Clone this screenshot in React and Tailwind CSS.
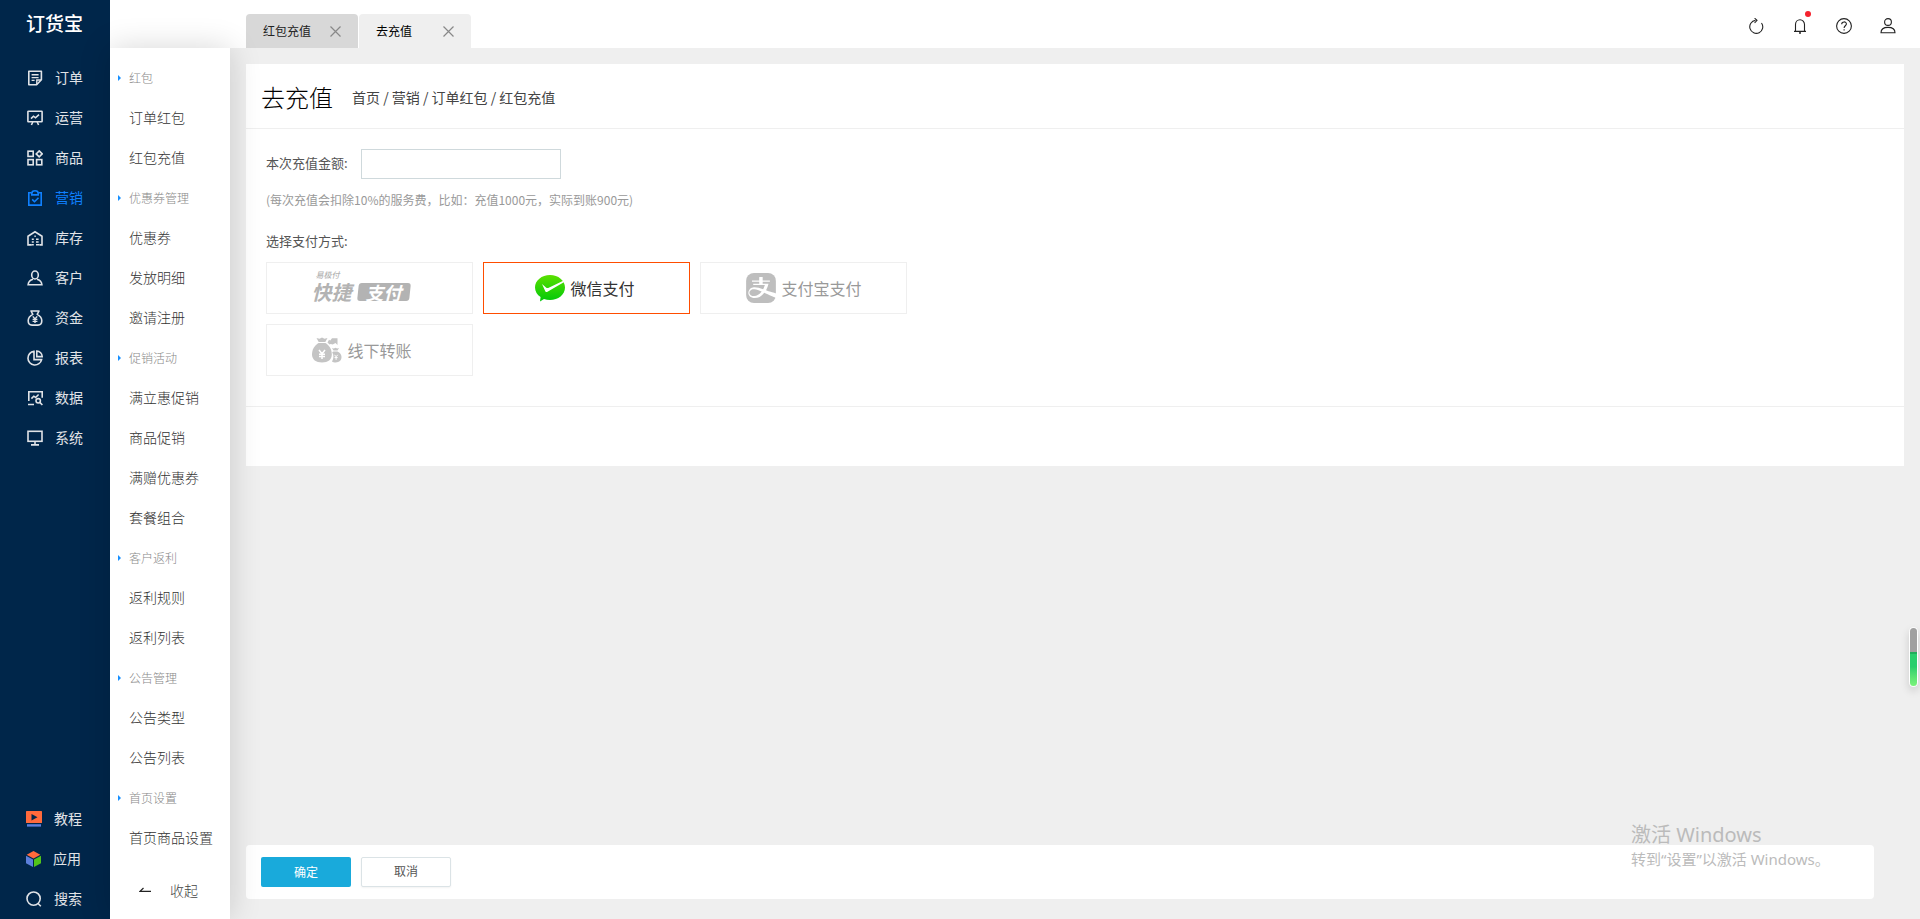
import React, { useState } from 'react';
import { SiAlipay } from 'react-icons/si';

function Icon({ children, className = 'size-4', width = 1.6 }) {
  return (
    <svg
      viewBox="0 0 16 16"
      className={`${className} shrink-0`}
      fill="none"
      stroke="currentColor"
      strokeWidth={width}
      aria-hidden="true"
    >
      {children}
    </svg>
  );
}

const NAV = [
  {
    label: '订单',
    icon: (
      <>
        <path d="M1.800 1.200h12.600v8.600l-4.800 5H1.800z" strokeLinejoin="round" />
        <path d="M4.600 4.800h7M4.600 7.600h7M4.600 10.400h3" strokeWidth="1.400" />
        <path d="M14 10H9.800v4.600" strokeWidth="1.400" />
      </>
    ),
  },
  {
    label: '运营',
    icon: (
      <>
        <rect x="0.900" y="1.200" width="14.200" height="10.600" rx="0.600" />
        <path d="M4 8.600l2.500-2.400 2 1.600L12 4.600" />
        <path d="M5.800 12l-1.400 3M10.200 12l1.400 3" />
      </>
    ),
  },
  {
    label: '商品',
    icon: (
      <>
        <rect x="1" y="1.200" width="5.200" height="5.200" />
        <rect x="1" y="9.600" width="5.200" height="5.200" />
        <rect x="9.600" y="9.600" width="5.200" height="5.200" />
        <path d="M12.200 0.900l3 3-3 3-3-3z" />
      </>
    ),
  },
  {
    label: '营销',
    active: true,
    icon: (
      <>
        <path d="M4.600 2.800H1.800v12.300h12.400V2.800h-2.800" />
        <path d="M4.800 4.900V3.400a3.200 2.600 0 016.400 0v1.500z" />
        <path d="M5.200 9.400l2.300 2.300 4-4" />
      </>
    ),
  },
  {
    label: '库存',
    icon: (
      <>
        <path d="M4.600 14.900H1V6.200L8 1.800l7 4.400v8.700h-2.400" />
        <path d="M7.400 6.200h1.400M4.800 9.200h2M9 9.200h2.600M4.800 12h2M9 12h2.600M4.400 14.800h2.400M9 14.800h3.600" strokeWidth="1.400" />
      </>
    ),
  },
  {
    label: '客户',
    icon: (
      <>
        <ellipse cx="8" cy="5" rx="3.300" ry="4" />
        <path d="M6 9.300c-3 .7-4.600 2-4.900 5.500h13.800c-.3-3.500-1.900-4.800-4.900-5.500" />
      </>
    ),
  },
  {
    label: '资金',
    icon: (
      <>
        <path d="M4 1h8l-1.800 3.400c3.200 1.600 4.600 4 4.600 6.400 0 2.700-1.700 4.300-3.800 4.300H5c-2.100 0-3.800-1.600-3.800-4.300 0-2.400 1.400-4.800 4.600-6.400z" strokeLinejoin="round" />
        <path d="M5.800 6.400L8 9l2.200-2.600M8 9v4M5.600 9.400h4.800M5.600 11.400h4.800" strokeWidth="1.400" />
      </>
    ),
  },
  {
    label: '报表',
    icon: (
      <>
        <path d="M7 1.300a6.900 6.900 0 107.600 8.300H7z" />
        <path d="M9.800 1v5.600h5.400A5.600 5.600 0 009.800 1z" />
      </>
    ),
  },
  {
    label: '数据',
    icon: (
      <>
        <path d="M1.800 11V1.800h13.400v6M1 14.500h6" />
        <path d="M4.400 8.600l2.400-2.400 1.800 1.300 3-3" />
        <circle cx="11.200" cy="10.800" r="2.200" />
        <path d="M12.800 12.400l2.600 2.600" />
      </>
    ),
  },
  {
    label: '系统',
    icon: (
      <>
        <rect x="1" y="1.300" width="14" height="10" />
        <path d="M8 11.300v3.500M4 14.900h8" />
      </>
    ),
  },
];

const MENU = [
  { title: '红包', items: ['订单红包', '红包充值'] },
  { title: '优惠券管理', items: ['优惠券', '发放明细', '邀请注册'] },
  { title: '促销活动', items: ['满立惠促销', '商品促销', '满赠优惠券', '套餐组合'] },
  { title: '客户返利', items: ['返利规则', '返利列表'] },
  { title: '公告管理', items: ['公告类型', '公告列表'] },
  { title: '首页设置', items: ['首页商品设置'] },
];

function NavLink({ icon, label, active }) {
  return (
    <a
      href="#"
      className={`flex h-10 items-center gap-3 text-sm ${active ? 'text-[#0f80ff]' : 'text-[#e0e3e7]'}`}
    >
      {icon}
      <span className="pb-0.5">{label}</span>
    </a>
  );
}

function Sidebar() {
  return (
    <nav className="flex w-[110px] shrink-0 flex-col bg-[#00264a]">
      <div className="mb-2.5 flex h-12 items-center pb-0.5 pl-[26px] text-[19px] font-medium text-white">订货宝</div>
      <div className="pl-[27px]">
        {NAV.map((n) => (
          <NavLink key={n.label} label={n.label} active={n.active} icon={<Icon>{n.icon}</Icon>} />
        ))}
      </div>
      <div className="mt-auto pl-[26px]">
        <NavLink
          label="教程"
          icon={
            <svg viewBox="0 0 16 16" className="size-4 shrink-0" aria-hidden="true">
              <rect width="16" height="12" rx="0.600" fill="#ff6a3c" />
              <path d="M5.500 3v6.400L11.500 6.200z" fill="#00264a" />
              <rect x="1" y="13.200" width="14" height="2.400" fill="#5b7fdc" />
            </svg>
          }
        />
        <NavLink
          label="应用"
          icon={
            <svg viewBox="0 0 15 16" className="h-4 w-[15px] shrink-0" aria-hidden="true">
              <path d="M7.500 0l6.800 3.700-6.800 3.800L.7 3.700z" fill="#ff6a3c" />
              <path d="M0 4.800l7 3.800V16L0 12.200z" fill="#5b7fdc" />
              <path d="M15 4.800L8 8.600V16l7-3.800z" fill="#52c41a" />
            </svg>
          }
        />
        <NavLink
          label="搜索"
          icon={
            <Icon>
              <circle cx="7.600" cy="7.600" r="6.600" />
              <path d="M11.800 12.200l3 3" />
            </Icon>
          }
        />
      </div>
    </nav>
  );
}

function SubMenu() {
  return (
    <aside className="relative z-10 flex w-[120px] shrink-0 flex-col bg-white pt-2.5 shadow-[0_0_30px_rgba(0,0,0,0.16)]">
      {MENU.map((g) => (
        <div key={g.title}>
          <h2 className="flex h-10 items-center gap-2 pl-2 text-xs font-light text-[#888]">
            <svg viewBox="0 0 3 6" className="h-1.5 w-[3px]" aria-hidden="true">
              <path d="M0 0l3 3-3 3z" fill="#1890ff" />
            </svg>
            {g.title}
          </h2>
          {g.items.map((t) => (
            <a key={t} href="#" className="flex h-10 items-center pb-0.5 pl-[19px] text-sm font-light text-[#333]">
              {t}
            </a>
          ))}
        </div>
      ))}
      <button type="button" className="mt-auto mb-2 flex h-10 items-center gap-[19px] pb-0.5 pl-[29px] text-sm font-light text-[#444]">
        <svg viewBox="0 0 12 6" className="h-1.5 w-3" fill="none" stroke="#222" strokeWidth="1.200" aria-hidden="true">
          <path d="M12 4.400H1L4.500 1" />
        </svg>
        收起
      </button>
    </aside>
  );
}

function Tab({ label, active }) {
  return (
    <div
      className={`flex h-[34px] w-28 items-center justify-between rounded-t px-[17px] text-xs ${active ? 'bg-[#efefef] text-black' : 'bg-[#d8d8d8] text-[#222]'}`}
    >
      <button type="button">{label}</button>
      <button type="button" aria-label={`关闭${label}`}>
        <svg viewBox="0 0 11 11" className="size-[11px]" stroke="#888" strokeWidth="1.200" aria-hidden="true">
          <path d="M.5.500l10 10M10.500.500l-10 10" />
        </svg>
      </button>
    </div>
  );
}

function Header() {
  return (
    <header className="flex h-12 shrink-0 items-end bg-white pr-6 pl-[136px]">
      <div className="flex gap-px">
        <Tab label="红包充值" />
        <Tab label="去充值" active />
      </div>
      <div className="ml-auto flex gap-7 pb-3.5 text-[#222]">
        <button type="button" aria-label="刷新">
          <Icon width={1.1}>
            <path d="M7.500 2.400A6.500 6.500 0 1013.500 5" />
            <path d="M6.600.200l2.400 2.200L6.600 5" />
          </Icon>
        </button>
        <button type="button" aria-label="通知" className="relative">
          <Icon width={1.1}>
            <path d="M3.500 13V6.500a4.500 4.800 0 019 0V13M2 13.400h12M8 13.400v2.400" />
            <path d="M7 15h2" />
          </Icon>
          <span className="absolute -top-[7px] left-[13px] size-1.5 rounded-full bg-[#f5222d]" />
        </button>
        <button type="button" aria-label="帮助">
          <Icon width={1.1}>
            <circle cx="8" cy="8" r="7.400" />
            <path d="M5.700 6.200c0-3 4.700-3 4.700-.2 0 1.700-2.300 1.900-2.300 3.900M8.100 11.200v1.400" />
          </Icon>
        </button>
        <button type="button" aria-label="账户">
          <Icon width={1.1}>
            <circle cx="8" cy="4" r="3.400" />
            <path d="M1 14.800c0-3.500 2.800-5.400 7-5.400s7 1.900 7 5.400z" />
          </Icon>
        </button>
      </div>
    </header>
  );
}

function QuickPayLogo() {
  return (
    <span className="flex flex-col gap-0.5 pb-1 italic text-[#b3b3b3]">
      <span className="pl-1 text-[8px] leading-[10px] font-medium">易极付</span>
      <span className="flex items-center gap-1.5 leading-5 font-bold">
        <span className="text-xl leading-5">快捷</span>
        <span className="relative flex h-[18px] w-[52px] items-center justify-center text-lg leading-[18px] text-white before:absolute before:inset-0 before:-skew-x-6 before:rounded-[3px] before:bg-[#b3b3b3]">
          <span className="relative">支付</span>
        </span>
      </span>
    </span>
  );
}

function WeChatLogo() {
  return (
    <svg viewBox="0 0 30 27" className="h-[27px] w-[30px] shrink-0" aria-hidden="true">
      <defs>
        <linearGradient id="wx" x1="0" y1="0" x2="0" y2="1">
          <stop offset="0" stopColor="#5be000" />
          <stop offset="1" stopColor="#00c80a" />
        </linearGradient>
      </defs>
      <path
        d="M15 0c8.300 0 15 5.500 15 12.500S23.300 25 15 25c-2.200 0-4.200-.4-6-1l-4 2.600.6-4.500C2.200 19.800 0 16.400 0 12.500 0 5.500 6.700 0 15 0z"
        fill="url(#wx)"
      />
      <path d="M7 9l4.300 3.700c.6.500 1.200.5 1.900.2L28.800 5.400 29.200 7 12.500 16.800c-1 .6-1.700.3-2.200-.6z" fill="#fff" />
    </svg>
  );
}

function AlipayLogo() {
  return <SiAlipay className="size-[30px] shrink-0 rounded-lg text-[#bebebe]" aria-hidden="true" />;
}

function TransferLogo() {
  return (
    <svg viewBox="0 0 30 26" className="h-[26px] w-[30px] shrink-0" aria-hidden="true">
      <g fill="#c4c4c4">
        <path d="M4.500 1l3 .8L10 .6l2.500 1.200 3-.8-2.200 4H6.700z" />
        <path d="M6.500 6h7c4 2.500 6.300 6.500 6.300 11.500 0 5-3.800 8-9.800 8s-10-3-10-8C0 12.500 2.500 8.500 6.500 6z" />
        <path d="M15.500 5.500L17 2.800 18.300 3.500 20 1.300h5.500V8l-2-2-2.800 1.600-2-.6-1.200.5z" />
        <path d="M20 11l1.800.5 1.700-.7 1.700.7 1.800-.5-1.500 2.500h-4z" />
        <path d="M21.500 14.500h4c2.500 1 4 3 4 5.600 0 3.300-2.300 5.400-5.800 5.400-1.500 0-2.800-.4-3.700-1 1.800-3 2-6.300.2-9.300z" />
      </g>
      <path d="M7 13l3 3.800 3-3.800M10 16.800V22M7 17.200h6M7 19.500h6" stroke="#fff" strokeWidth="1.500" fill="none" />
      <path d="M22.500 17.800l1.600 2 1.600-2M24.100 19.800v3M22.500 20.600h3.200" stroke="#fff" strokeWidth="1" fill="none" />
    </svg>
  );
}

const METHODS = [
  { id: 'quick', logo: <QuickPayLogo />, inner: 'w-29' },
  { id: 'wechat', logo: <WeChatLogo />, text: '微信支付', inner: 'w-26' },
  { id: 'alipay', logo: <AlipayLogo />, text: '支付宝支付', inner: 'w-29' },
  { id: 'transfer', logo: <TransferLogo />, text: '线下转账', inner: 'w-29' },
];

function PaymentMethods() {
  const [method, setMethod] = useState('wechat');
  return (
    <fieldset>
      <legend className="text-[13px] leading-5 text-[#555]">选择支付方式:</legend>
      <div className="mt-[11px] flex max-w-[660px] flex-wrap gap-2.5">
        {METHODS.map((m) => {
          const on = m.id === method;
          return (
            <label
              key={m.id}
              className={`relative flex h-[52px] w-[207px] items-center justify-center border text-base ${on ? 'border-[#ff4d00] text-[#333]' : 'border-[#efefef] text-[#999]'}`}
            >
              <input
                type="radio"
                name="method"
                value={m.id}
                checked={on}
                onChange={() => setMethod(m.id)}
                className="sr-only"
              />
              <span className={`flex items-center gap-1.5 ${m.inner}`}>
                {m.logo}
                {m.text && <span className="whitespace-nowrap">{m.text}</span>}
              </span>
            </label>
          );
        })}
      </div>
    </fieldset>
  );
}

export default function App() {
  return (
    <div className="relative flex min-h-screen bg-[#efefef] font-['Noto_Sans_CJK_SC',sans-serif]">
      <Sidebar />
      <div className="flex min-w-0 flex-1 flex-col">
        <Header />
        <div className="flex flex-1">
          <SubMenu />
          <main className="flex min-w-0 flex-1 flex-col pt-4 pr-4 pb-5 pl-4">
            <section className="bg-white">
              <div className="flex h-[65px] items-center gap-[19px] border-b border-[#efefef] pt-0.5 pl-[15px]">
                <h1 className="text-2xl font-light text-black">去充值</h1>
                <p className="text-sm text-[#444]">首页 / 营销 / 订单红包 / 红包充值</p>
              </div>
              <div className="border-b border-[#efefef] px-5 pt-5 pb-[30px]">
                <div className="flex items-center gap-2.5">
                  <label htmlFor="amount" className="w-[85px] pb-0.5 text-[13px] whitespace-nowrap text-[#555]">
                    本次充值金额:
                  </label>
                  <input id="amount" type="text" className="h-[30px] w-[200px] border border-[#cfd9dc] px-2 text-sm outline-none" />
                </div>
                <p className="mt-[11px] mb-[21px] text-xs leading-5 text-[#999]">
                  (每次充值会扣除10%的服务费，比如：充值1000元，实际到账900元)
                </p>
                <PaymentMethods />
              </div>
              <div className="h-[59px]" />
            </section>
            <footer className="mt-auto mr-[30px] flex gap-2.5 rounded-sm bg-white px-[15px] py-3">
              <button type="button" className="h-[30px] w-[90px] rounded-xs bg-[#19aadb] text-xs text-white">
                确定
              </button>
              <button
                type="button"
                className="h-[30px] w-[90px] rounded-xs border border-[#dbe3e6] bg-white pb-0.5 text-xs text-[#555] shadow-xs"
              >
                取消
              </button>
            </footer>
          </main>
        </div>
      </div>

      <div className="absolute top-[627px] right-0.5 w-[9px] overflow-hidden rounded-full border border-white shadow-[0_4px_8px_rgba(0,0,0,0.15)]">
        <div className="h-6 bg-[#a0a0a0]" />
        <div className="h-[34px] border-t-2 border-[#1fae5c] bg-linear-to-b from-[#28cf6d] from-40% to-[#7bf47b]" />
      </div>

      <div className="pointer-events-none absolute right-[89px] bottom-12 w-[200px] font-['Noto_Sans','Noto_Sans_CJK_SC',sans-serif] whitespace-nowrap text-[#bbb]">
        <p className="text-xl leading-6">激活 Windows</p>
        <p className="text-[15px] leading-6">转到“设置”以激活 Windows。</p>
      </div>
    </div>
  );
}
